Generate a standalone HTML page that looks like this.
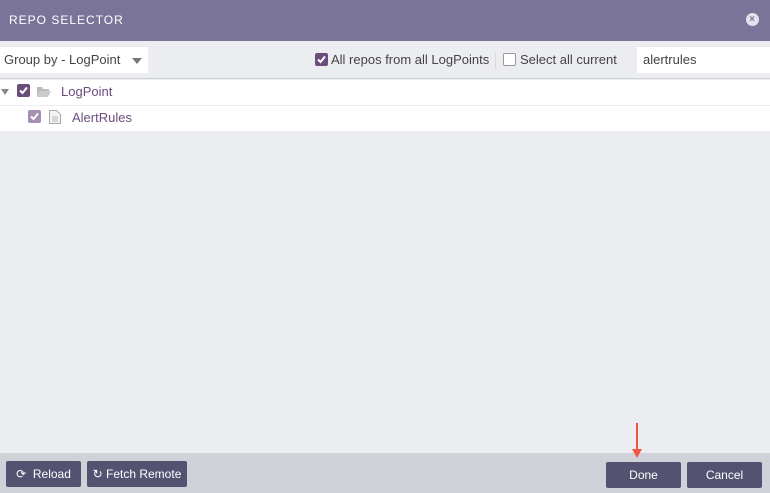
<!DOCTYPE html>
<html><head><style>
*{box-sizing:border-box;margin:0;padding:0}
body{width:770px;height:493px;overflow:hidden;font-family:"Liberation Sans",sans-serif;background:#ecedf1;position:relative}
.hdr{position:absolute;left:0;top:0;width:770px;height:41px;background:#7a7598;color:#fff;font-size:12px;letter-spacing:1px;padding:13px 0 0 9px}
.x{position:absolute;right:11px;top:13px;width:13px;height:13px;border-radius:50%;background:#e4e2ec;color:#7a7598;font-size:10px;line-height:13px;text-align:center;font-weight:bold}
.tb{position:absolute;top:41px;left:0;width:770px;height:38px;border-bottom:1px solid #cfd0d6}
.sel{position:absolute;left:0;top:6px;width:148px;height:26px;background:#fff;font-size:13px;color:#444;padding:5px 4px}
.sel:after{content:"";position:absolute;right:6px;top:11px;border:5px solid transparent;border-top:6px solid #777}
.cb{position:absolute;width:13px;height:13px;border-radius:2px;background:#6b4d7c}
.cb svg{position:absolute;left:0;top:0}
.cb.e{background:#fff;border:1px solid #999}
.lbl{position:absolute;font-size:13px;color:#444}
.srch{position:absolute;left:637px;top:6px;width:133px;height:26px;background:#fff;font-size:13px;color:#444;padding:5px 6px}
.row{position:absolute;left:0;width:770px;height:25px;background:#fff}
.t{position:absolute;font-size:13px;color:#6b4d7c}
.ft{position:absolute;left:0;top:453px;width:770px;height:40px;background:#d1d1da}
.b{position:absolute;height:26px;background:#535270;border-radius:2px;color:#fff;font-size:12px;text-align:center;line-height:26px}
</style></head><body>
<div class="hdr">REPO SELECTOR<div class="x">×</div></div>
<div class="tb">
<div class="sel">Group by - LogPoint</div>
<div class="cb" style="left:315px;top:12px"><svg width="13" height="13"><path d="M3 6.5l2.5 2.5L10 3.5" stroke="#fff" stroke-width="2" fill="none"/></svg></div>
<div class="lbl" style="left:331px;top:11px">All repos from all LogPoints</div>
<div style="position:absolute;left:495px;top:11px;width:1px;height:17px;background:#d8d8de"></div>
<div class="cb e" style="left:503px;top:12px"></div>
<div class="lbl" style="left:520px;top:11px">Select all current</div>
<div class="srch">alertrules</div>
</div>
<div class="row" style="top:80px"></div>
<div style="position:absolute;left:1px;top:89px;border:4px solid transparent;border-top:6px solid #888"></div>
<div class="cb" style="left:17px;top:84px"><svg width="13" height="13"><path d="M3 6.5l2.5 2.5L10 3.5" stroke="#fff" stroke-width="2" fill="none"/></svg></div>
<svg style="position:absolute;left:37px;top:86px" width="14" height="11"><path d="M0 1h5l1 2h6v2H3L0 11z" fill="#bbb"/><path d="M3 5h11l-3 6H0z" fill="#ccc"/></svg>
<div class="t" style="left:61px;top:84px">LogPoint</div>
<div class="row" style="top:106px"></div>
<div class="cb" style="left:28px;top:110px;background:#a58fb3"><svg width="13" height="13"><path d="M3 6.5l2.5 2.5L10 3.5" stroke="#fff" stroke-width="2" fill="none"/></svg></div>
<svg style="position:absolute;left:49px;top:110px" width="12" height="14"><path d="M.5.5h7l4 4v9H.5z" fill="#f3f3f3" stroke="#aaa"/><path d="M3 7h6M3 9h6M3 11h6" stroke="#bbb"/></svg>
<div class="t" style="left:72px;top:110px">AlertRules</div>
<div class="ft"></div>
<div class="b" style="left:6px;top:461px;width:75px">⟳ &nbsp;Reload</div>
<div class="b" style="left:87px;top:461px;width:100px">↻ Fetch Remote</div>
<div class="b" style="left:606px;top:462px;width:75px">Done</div>
<div class="b" style="left:687px;top:462px;width:75px">Cancel</div>
<div style="position:absolute;left:636px;top:423px;width:2px;height:28px;background:#f05545"></div>
<div style="position:absolute;left:632px;top:449px;border:5px solid transparent;border-top:9px solid #f05545"></div>
</body></html>
